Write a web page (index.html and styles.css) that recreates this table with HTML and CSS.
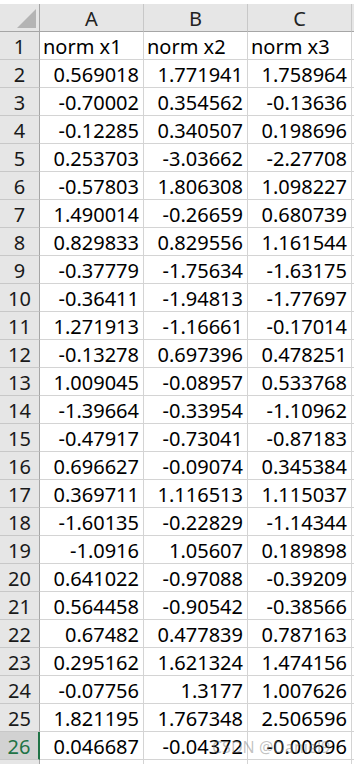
FILE: index.html
```html
<!DOCTYPE html>
<html>
<head>
<meta charset="utf-8">
<link rel="stylesheet" href="styles.css">
</head>
<body>
<div class="sheet" id="sheet">
  <div class="corner"><span class="tri"></span></div>
  <div class="colhead">A</div>
  <div class="colhead">B</div>
  <div class="colhead">C</div>
  <div class="colhead rest"></div>
</div>
<div class="watermark">CSDN @Daniel9</div>
<script src="script.js"></script>
</body>
</html>
```
FILE: script.js
```js
var rows = [
  ["norm x1","norm x2","norm x3"],
  ["0.569018","1.771941","1.758964"],
  ["-0.70002","0.354562","-0.13636"],
  ["-0.12285","0.340507","0.198696"],
  ["0.253703","-3.03662","-2.27708"],
  ["-0.57803","1.806308","1.098227"],
  ["1.490014","-0.26659","0.680739"],
  ["0.829833","0.829556","1.161544"],
  ["-0.37779","-1.75634","-1.63175"],
  ["-0.36411","-1.94813","-1.77697"],
  ["1.271913","-1.16661","-0.17014"],
  ["-0.13278","0.697396","0.478251"],
  ["1.009045","-0.08957","0.533768"],
  ["-1.39664","-0.33954","-1.10962"],
  ["-0.47917","-0.73041","-0.87183"],
  ["0.696627","-0.09074","0.345384"],
  ["0.369711","1.116513","1.115037"],
  ["-1.60135","-0.22829","-1.14344"],
  ["-1.0916","1.05607","0.189898"],
  ["0.641022","-0.97088","-0.39209"],
  ["0.564458","-0.90542","-0.38566"],
  ["0.67482","0.477839","0.787163"],
  ["0.295162","1.621324","1.474156"],
  ["-0.07756","1.3177","1.007626"],
  ["1.821195","1.767348","2.506596"],
  ["0.046687","-0.04372","-0.00696"],
  ["","",""]
];
var sheet = document.getElementById("sheet");
rows.forEach(function (r, i) {
  var h = document.createElement("div");
  h.className = "rowhead" + (i === 25 ? " sel" : "");
  h.textContent = i < 26 ? String(i + 1) : "";
  sheet.appendChild(h);
  r.forEach(function (v) {
    var c = document.createElement("div");
    c.className = "cell" + (i === 0 ? " text" : "");
    c.textContent = v;
    sheet.appendChild(c);
  });
  var e = document.createElement("div");
  e.className = "cell rest";
  sheet.appendChild(e);
});
```
FILE: styles.css
```css
html, body {
  margin: 0;
  padding: 0;
  background: #ffffff;
  overflow: hidden;
  width: 354px;
  height: 764px;
}
body {
  position: relative;
  font-family: "Noto Sans", "Liberation Sans", Arial, sans-serif;
  color: #000;
}
.sheet {
  display: grid;
  grid-template-columns: 40px 104px 104px 104px 2px;
  grid-auto-rows: 28px;
  padding-top: 4px;
  font-size: 20px;
}
.sheet > div {
  box-sizing: border-box;
  height: 28px;
  line-height: 22px;
  padding-top: 4px;
  white-space: nowrap;
  overflow: hidden;
}
.corner {
  background: #e6e6e6;
  border-right: 1px solid #a6a6a6;
  border-bottom: 1px solid #a6a6a6;
  position: relative;
}
.tri {
  position: absolute;
  right: 3px;
  bottom: 3px;
  width: 0;
  height: 0;
  border-left: 19px solid transparent;
  border-bottom: 19px solid #b4b4b4;
}
.colhead {
  background: #e6e6e6;
  border-right: 1px solid #c8c8c8;
  border-bottom: 1px solid #a6a6a6;
  text-align: center;
  color: #222;
}
.colhead.rest {
  border-right: none;
}
.rowhead {
  background: #e6e6e6;
  border-right: 1px solid #a6a6a6;
  border-bottom: 1px solid #c8c8c8;
  text-align: center;
  color: #1a1a1a;
}
.rowhead.sel {
  background: #d2d2d2;
  color: #217346;
  border-right: 2px solid #217346;
}
.cell {
  border-right: 1px solid #d4d4d4;
  border-bottom: 1px solid #d4d4d4;
  text-align: right;
  padding-right: 4px;
}
.cell.text {
  text-align: left;
  padding-left: 3px;
  padding-right: 0;
}
.cell.rest {
  border-right: none;
  padding: 0;
}
.watermark {
  position: absolute;
  left: 212px;
  top: 737px;
  font-size: 16px;
  line-height: 20px;
  color: rgba(120, 120, 120, 0.45);
  white-space: nowrap;
}
```
